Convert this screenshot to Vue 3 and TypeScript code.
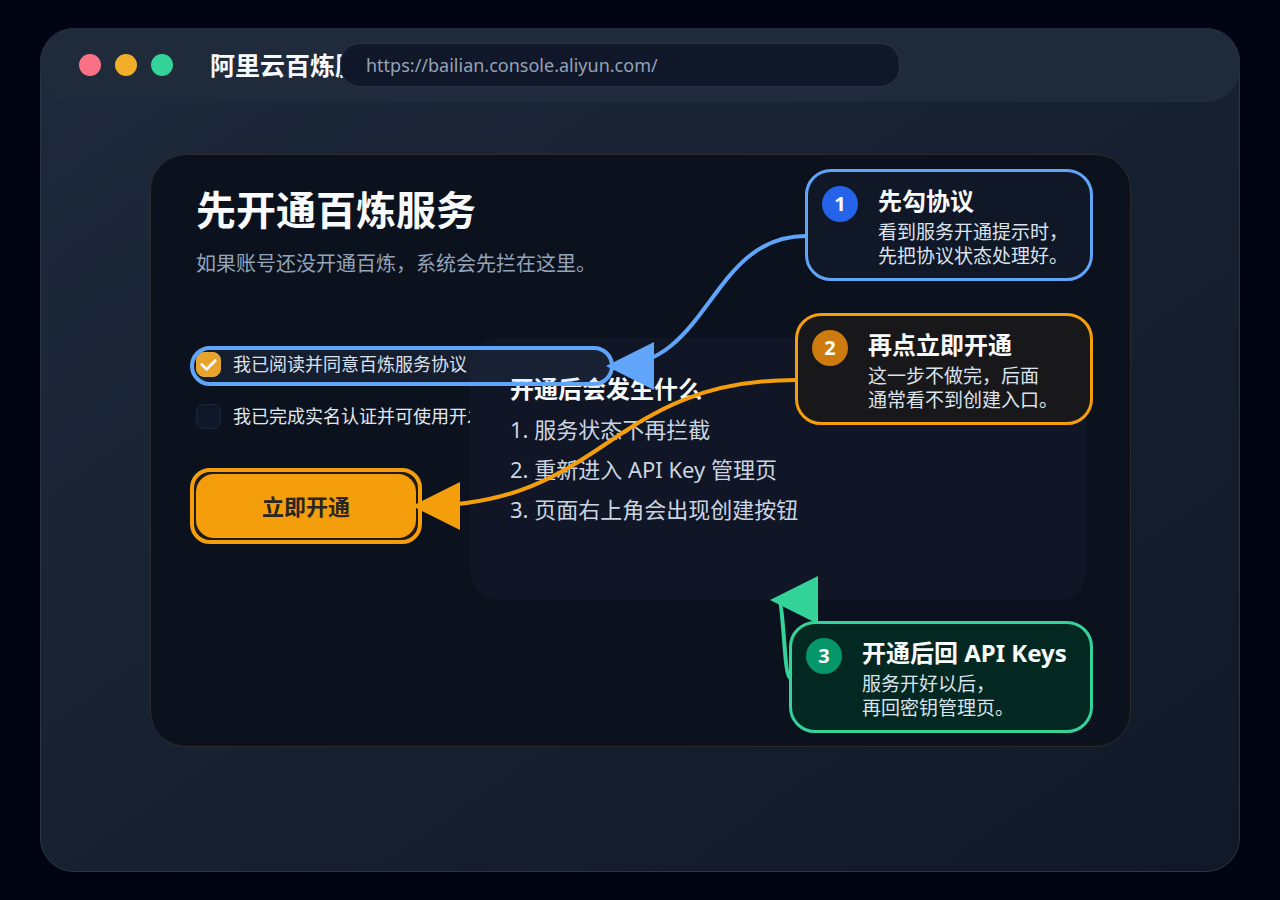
<script setup lang="ts">
import { ref } from 'vue'

interface Option {
  id: string
  label: string
  checked: boolean
}

interface Callout {
  step: number
  tone: string
  title: string
  lines: string[]
}

const options = ref<Option[]>([
  { id: 'agree', label: '我已阅读并同意百炼服务协议', checked: true },
  { id: 'verified', label: '我已完成实名认证并可使用开发', checked: false },
])

const results: string[] = [
  '1. 服务状态不再拦截',
  '2. 重新进入 API Key 管理页',
  '3. 页面右上角会出现创建按钮',
]

const callouts: Callout[] = [
  { step: 1, tone: 'blue', title: '先勾协议', lines: ['看到服务开通提示时，', '先把协议状态处理好。'] },
  { step: 2, tone: 'orange', title: '再点立即开通', lines: ['这一步不做完，后面', '通常看不到创建入口。'] },
  { step: 3, tone: 'green', title: '开通后回 API Keys', lines: ['服务开好以后，', '再回密钥管理页。'] },
]
</script>

<template>
  <main class="stage">
    <div class="window">
      <header class="bar">
        <div class="lights">
          <span class="light red"></span>
          <span class="light amber"></span>
          <span class="light mint"></span>
        </div>
        <div class="title">阿里云百炼服</div>
        <input
          class="address"
          type="text"
          aria-label="网址"
          value="https://bailian.console.aliyun.com/"
          readonly
        />
      </header>

      <section class="dialog">
        <h1>先开通百炼服务</h1>
        <p class="sub">如果账号还没开通百炼，系统会先拦在这里。</p>

        <div class="columns">
          <form class="form" @submit.prevent>
            <label v-for="o in options" :key="o.id" class="option" :for="o.id">
              <span class="tick">
                <input :id="o.id" v-model="o.checked" type="checkbox" />
                <svg v-if="o.checked" viewBox="0 0 26 26" aria-hidden="true">
                  <path d="M6 13 L11 18 L20 9" />
                </svg>
              </span>
              <span>{{ o.label }}</span>
            </label>
            <button class="primary" type="submit">立即开通</button>
          </form>

          <div class="panel">
            <h2>开通后会发生什么</h2>
            <p v-for="r in results" :key="r">{{ r }}</p>
          </div>
        </div>

        <aside v-for="c in callouts" :key="c.step" class="callout" :class="c.tone">
          <span class="badge">{{ c.step }}</span>
          <div>
            <h3>{{ c.title }}</h3>
            <p v-for="l in c.lines" :key="l">{{ l }}</p>
          </div>
        </aside>

        <svg class="marks" width="980" height="592" viewBox="150 154 980 592" aria-hidden="true">
          <rect class="ring ring-blue" x="192" y="348" width="420" height="36" rx="18" />
          <rect class="ring ring-orange" x="192" y="470" width="228" height="72" rx="18" />
          <path class="line line-blue" d="M806 236 C710 236 710 366 614 366" />
          <path class="head-blue" d="M606 366 L654 342 V390 Z" />
          <path class="line line-orange" d="M796 380 C607 380 607 506 420 506" />
          <path class="head-orange" d="M412 506 L460 482 V530 Z" />
          <path class="line line-green" d="M790 678 C784 678 784 600 778 600" />
          <path class="head-green" d="M770 600 L818 576 V624 Z" />
        </svg>
      </section>
    </div>
  </main>
</template>

<style>
body {
  margin: 0;
  background: #010413;
}
</style>

<style scoped>
* {
  box-sizing: border-box;
}

h1,
h2,
h3,
p {
  margin: 0;
}

.stage {
  min-height: 100vh;
  padding: 28px 40px;
  display: flex;
  background: #010413;
  color: #f8fafc;
  font-family: 'Noto Sans', 'Noto Sans CJK SC', sans-serif;
}

.window {
  flex: 1;
  border: 1px solid #2a3546;
  border-radius: 34px;
  background: linear-gradient(145deg, #1e293b, #172030 55%, #111827);
}

.bar {
  height: 74px;
  margin: -1px;
  padding: 0 39px;
  display: flex;
  align-items: center;
  border-radius: 34px;
  background: #1f2a3b;
}

.lights {
  display: flex;
  gap: 14px;
}

.light {
  width: 22px;
  height: 22px;
  border-radius: 50%;
}

.red {
  background: #fb7185;
}

.amber {
  background: #f0ae2b;
}

.mint {
  background: #34d399;
}

.title {
  flex: none;
  width: 130px;
  margin-left: 37px;
  font-size: 25px;
  font-weight: 700;
  line-height: 36px;
  white-space: nowrap;
}

.address {
  position: relative;
  width: 560px;
  height: 44px;
  padding: 0 25px;
  border: 1px solid #2a3446;
  border-radius: 20px;
  outline: none;
  background: #101728;
  color: #94a3b8;
  font-family: inherit;
  font-size: 18px;
}

.dialog {
  position: relative;
  min-height: 593px;
  margin: 53px 108px 0 109px;
  padding: 27px 44px 100px 45px;
  border: 1px solid #2c2a2a;
  border-radius: 36px;
  background: #0b121e;
}

h1 {
  font-size: 40px;
  line-height: 56px;
}

.sub {
  margin-top: 12px;
  color: #94a3b8;
  font-size: 20px;
  line-height: 28px;
}

.columns {
  margin-top: 60px;
  display: grid;
  grid-template-columns: 274px 1fr;
}

.form {
  padding-top: 13px;
}

.option {
  margin-bottom: 26px;
  display: flex;
  align-items: center;
  gap: 12px;
  color: #e2e8f0;
  font-size: 18px;
  line-height: 26px;
  white-space: nowrap;
}

.tick {
  display: grid;
  flex: none;
}

.tick input,
.tick svg {
  grid-area: 1 / 1;
  width: 25px;
  height: 25px;
  margin: 0;
}

.tick input {
  appearance: none;
  border: 1px solid #1e293b;
  border-radius: 8px;
  background: #0f172a;
}

.tick input:checked {
  border-color: #f2a829;
  background: #f3a41a;
}

.tick svg {
  fill: none;
  stroke: #fff;
  stroke-width: 3;
  stroke-linecap: round;
  stroke-linejoin: round;
  pointer-events: none;
}

.primary {
  display: block;
  width: 220px;
  height: 64px;
  margin-top: 45px;
  padding: 0 0 2px;
  border: 0;
  border-radius: 18px;
  background: #f59e0b;
  box-shadow: 0 0 0 3px #211a16;
  color: #292524;
  font-family: inherit;
  font-size: 22px;
  font-weight: 700;
}

.panel {
  position: relative;
  min-height: 262px;
  padding: 31px 40px;
  border-radius: 28px;
  background: #101626;
}

h2 {
  font-size: 24px;
  line-height: 40px;
}

.panel p {
  color: #cbd5e1;
  font-size: 22px;
  line-height: 40px;
}

.callout {
  position: absolute;
  right: 37px;
  height: 112px;
  padding: 14px;
  display: flex;
  gap: 20px;
  border: 3px solid;
  border-radius: 26px;
  white-space: nowrap;
}

.blue {
  top: 14px;
  width: 288px;
  border-color: #60a5fa;
  background: #101726;
}

.orange {
  top: 158px;
  width: 298px;
  border-color: #f59e0b;
  background: #18181a;
}

.green {
  top: 466px;
  width: 304px;
  border-color: #34d399;
  background: #032821;
}

.badge {
  flex: none;
  width: 36px;
  height: 36px;
  border-radius: 50%;
  color: #fff;
  font-size: 20px;
  font-weight: 700;
  line-height: 36px;
  text-align: center;
}

.blue .badge {
  background: #2563eb;
}

.orange .badge {
  background: #cd7a0f;
}

.green .badge {
  background: #059669;
}

h3 {
  margin-bottom: 4px;
  font-size: 24px;
  line-height: 30px;
}

.callout p {
  color: #dbe3ee;
  font-size: 19px;
  line-height: 24px;
}

.marks {
  position: absolute;
  top: -1px;
  left: -1px;
  overflow: visible;
  pointer-events: none;
}

.ring,
.line {
  stroke-width: 4;
}

.ring-blue {
  fill: rgba(120, 160, 210, 0.09);
}

.ring-orange {
  fill: none;
}

.line {
  fill: none;
  stroke-linecap: round;
}

.ring-blue,
.line-blue {
  stroke: #60a5fa;
}

.ring-orange,
.line-orange {
  stroke: #f59e0b;
}

.line-green {
  stroke: #34d399;
}

.head-blue {
  fill: #60a5fa;
}

.head-orange {
  fill: #f59e0b;
}

.head-green {
  fill: #34d399;
}
</style>
